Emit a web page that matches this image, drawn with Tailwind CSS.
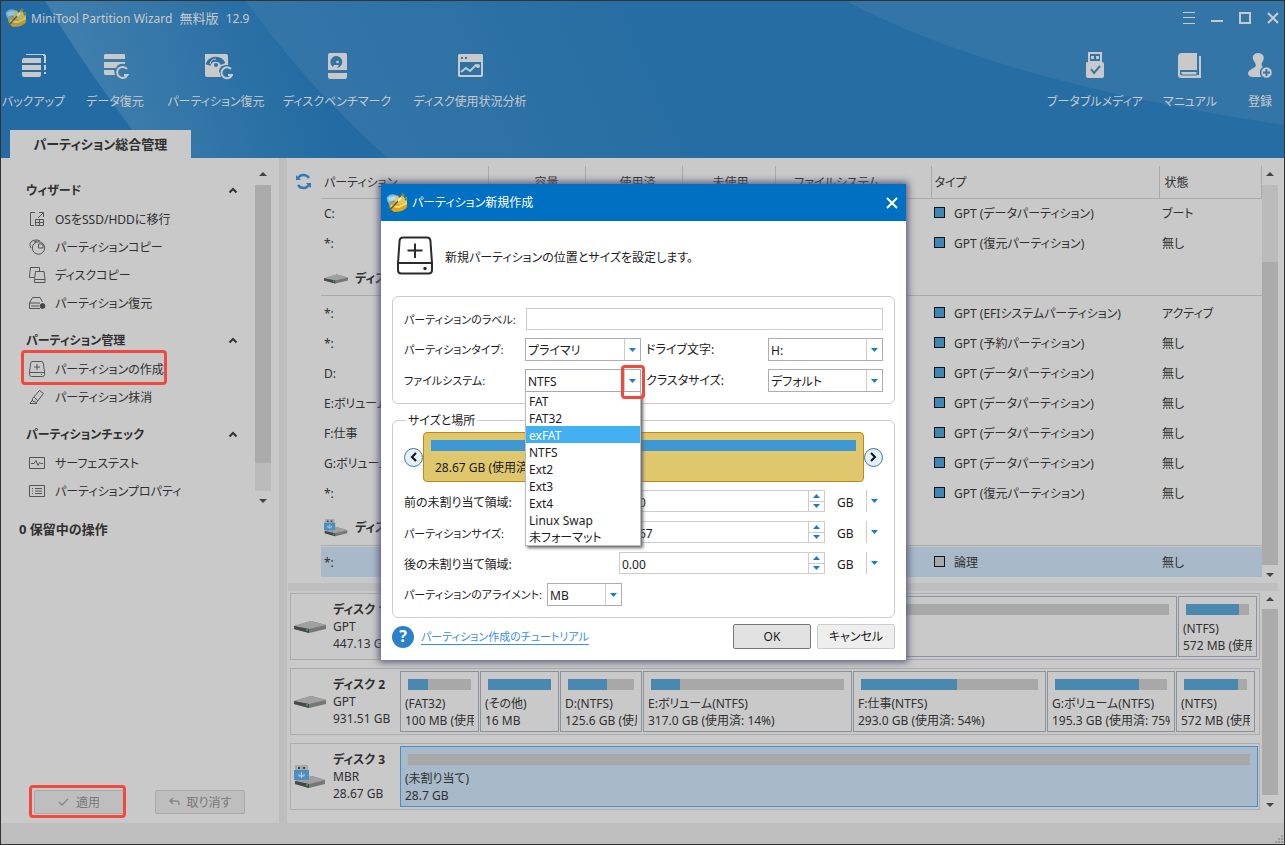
<!DOCTYPE html>
<html lang="ja">
<head>
	<meta charset="UTF-8">
	<meta name="viewport" content="width=device-width, initial-scale=1.0">
	<title>MiniTool Partition Wizard</title>
	<script src="https://cdn.jsdelivr.net/npm/@tailwindcss/browser@4"></script>
</head>
<body class="font-['Noto_Sans','Noto_Sans_CJK_JP',sans-serif] [font-feature-settings:'palt'] text-[12px] leading-[17px] text-[#303030] whitespace-nowrap">

	<!-- shared icons -->
	<svg class="hidden">
		<symbol id="logo" viewBox="0 0 22 22">
			<path d="M1 5Q4 1 10 3L13 6L3 12Q0 8 1 5Z" fill="#7db9de"/>
			<path d="M2 6Q6 3 11 5L9 8L3 9Z" fill="#b5dcf0"/>
			<path d="M3 12L9 9L13 11L21 8V15Q18 20 8 20L4 17Z" fill="#dfa81c"/>
			<path d="M8 9L11 3L14 6L17 1L18 6L21 5V10L14 13Z" fill="#e8c54c"/>
			<path d="M5 13L13 14L21 10V12L13 16L5 15Z" fill="#f7df72"/>
			<circle cx="17" cy="3" r="1.500" fill="#9c8126"/>
			<circle cx="20" cy="7" r="1.500" fill="#57934c"/>
			<path d="M1 21L14 7" stroke="#50616b" stroke-width="1.600"/>
			<path d="M12 9L15 6" stroke="#f3f3e4" stroke-width="1.800"/>
		</symbol>
		<symbol id="drive" viewBox="0 0 32 12">
			<path d="M0 5L17 0L32 4V8L15 12L0 8Z" fill="#777"/>
			<path d="M0 5L17 0L32 4L15 8Z" fill="#a0a0a0"/>
			<path d="M0 5L15 8V12L0 8Z" fill="#484848"/>
			<rect x="12" y="8" width="2" height="2" fill="#27a04c"/>
		</symbol>
		<symbol id="usbdrive" viewBox="0 0 32 24">
			<path d="M1 16L18 11L31 15V19L15 23L1 19Z" fill="#777"/>
			<path d="M1 16L18 11L31 15L15 19Z" fill="#a0a0a0"/>
			<path d="M1 16L15 19V23L1 19Z" fill="#484848"/>
			<rect x="12" y="19" width="2" height="2" fill="#27a04c"/>
			<path d="M1 0H14V6H1Z" fill="#a9a9a9"/>
			<path d="M4 2H6V4H4ZM9 2H11V4H9Z" fill="#444"/>
			<path d="M0 5H15V15H0Z" fill="#4c90c0"/>
			<path d="M7.500 7V13M5 9V11H10V9" stroke="#b6d3e6" fill="none"/>
		</symbol>
		<symbol id="down" viewBox="0 0 7 4"><path d="M0 0H7L3.500 4Z" fill="#1b7bcb"/></symbol>
		<symbol id="up" viewBox="0 0 7 4"><path d="M0 4H7L3.500 0Z" fill="#1b7bcb"/></symbol>
		<symbol id="sbup" viewBox="0 0 8 4"><path d="M0 4H8L4 0Z" fill="#444"/></symbol>
		<symbol id="sbdown" viewBox="0 0 8 4"><path d="M0 0H8L4 4Z" fill="#444"/></symbol>
		<symbol id="fold" viewBox="0 0 10 7"><path d="M1.500 5.500L5 2L8.500 5.500" fill="none" stroke="#333" stroke-width="2"/></symbol>
		<symbol id="newdisk" viewBox="0 0 36 39">
			<g fill="none" stroke="#2b2b2b" stroke-width="2">
				<path d="M6 1.500H30Q33 1.500 33.400 4.500L35 27V34Q35 37.500 31.500 37.500H4.500Q1 37.500 1 34V27L2.600 4.500Q3 1.500 6 1.500Z"/>
				<path d="M1.500 27H34.500M18 7.500V22M10.500 14.500H25.500"/>
			</g>
			<circle cx="28" cy="32.500" r="1.700" fill="#2b2b2b"/>
		</symbol>
	</svg>

	<div class="relative min-h-screen flex flex-col border border-[#333] bg-[#c9c9c9]">

		<!-- header -->
		<header class="relative h-[157px] bg-[#236ba2] text-[#c9c9c9] flex flex-col overflow-hidden">
			<svg class="absolute inset-0 w-full h-full" viewBox="0 0 1283 157" preserveAspectRatio="none">
				<defs>
					<linearGradient id="g1" gradientUnits="userSpaceOnUse" x1="60" y1="90" x2="300" y2="20"><stop offset="0" stop-color="#4280ae"/><stop offset="1" stop-color="#236ba2"/></linearGradient>
					<linearGradient id="g2" gradientUnits="userSpaceOnUse" x1="270" y1="90" x2="620" y2="-60"><stop offset="0" stop-color="#3576a8"/><stop offset="1" stop-color="#266da3"/></linearGradient>
				</defs>
				<path d="M44 0Q80 60 132 130V157H387Q310 80 245 0Z" fill="url(#g1)"/>
				<path d="M245 0Q310 90 387 157H1283V0Z" fill="url(#g2)"/>
				<path d="M845 0Q1000 82 1283 124V0Z" fill="#3375a7"/>
			</svg>
			<div class="relative flex items-center h-[34px] pl-1 -mr-[3px]">
				<svg class="w-[22px] h-[22px] opacity-80"><use href="#logo"/></svg>
				<h1 class="ml-1 grow">MiniTool Partition Wizard <span class="mx-1 text-[13px]">無料版</span> 12.9</h1>
				<button class="w-7 h-7 grid place-items-center" aria-label="メニュー"><svg class="w-3 h-3" stroke="#c9c9c9"><path d="M0 .5H12M0 5.500H12M0 11.500H12"/></svg></button>
				<button class="w-7 h-7 grid place-items-center" aria-label="最小化"><svg class="w-3 h-3" stroke="#c9c9c9" stroke-width="2"><path d="M0 9H12"/></svg></button>
				<button class="w-7 h-7 grid place-items-center" aria-label="最大化"><svg class="w-3 h-3" fill="none" stroke="#c9c9c9" stroke-width="2"><path d="M1 1H11V11H1Z"/></svg></button>
				<button class="w-7 h-7 grid place-items-center" aria-label="閉じる"><svg class="w-3 h-3" stroke="#c9c9c9" stroke-width="2.200"><path d="M1 1L11 11M11 1L1 11"/></svg></button>
			</div>
			<nav class="relative flex h-[95px] pt-4">
				<button class="w-[65px] flex flex-col items-center gap-3">
					<svg class="w-[30px] h-[30px]" viewBox="0 0 30 30" fill="#c9c9c9"><path d="M7 3H26V5H24V4H7ZM25 4H27V12H25ZM25 14H27V19H25ZM25 21H27V23H25ZM5 7H22V12H3V9Q3 7 5 7ZM3 14H22V19H3ZM3 21H22V24Q22 26 20 26H5Q3 26 3 24Z"/></svg>
					バックアップ
				</button>
				<button class="w-[98px] flex flex-col items-center gap-3">
					<svg class="w-[30px] h-[30px]" viewBox="0 0 30 30" fill="#c9c9c9"><path d="M5 3H24Q25 3 25 4V8H4V4ZM4 11H25V13Q18 12 16 17H4ZM4 19H14L15 24H5L4 23Z"/><path d="M27 18A5.500 5.500 0 1 0 27.500 24H24" fill="none" stroke="#c9c9c9" stroke-width="2"/></svg>
					データ復元
				</button>
				<button class="w-[104px] flex flex-col items-center gap-3">
					<svg class="w-[34px] h-[30px]" viewBox="0 0 34 30"><path d="M6 3H27Q29 3 29 5V14Q21 13 20 20L22 26H8Q6 26 6 24Z" fill="#c9c9c9"/><path d="M9 14A8 8 0 0 1 24 13" stroke="#2d71a6" stroke-width="5" fill="none"/><path d="M11 13A6 6 0 0 1 17 8" stroke="#c9c9c9" fill="none"/><circle cx="17" cy="14" r="2" fill="#2d71a6"/><path d="M32 18A5.500 5.500 0 1 0 33 24H29" fill="none" stroke="#c9c9c9" stroke-width="2"/></svg>
					パーティション復元
				</button>
				<button class="w-[138px] flex flex-col items-center gap-3">
					<svg class="w-[30px] h-[30px]" viewBox="0 0 30 30"><path d="M8 2H23Q25 2 25 4V19H6V4Q6 2 8 2ZM6 22H25V26Q25 28 23 28H8Q6 28 6 26Z" fill="#c9c9c9"/><path d="M11 16A6 6 0 1 1 15 17L17 14H12Z" fill="#3073a7"/><circle cx="15.500" cy="11" r="1.300" fill="#c9c9c9"/></svg>
					ディスクベンチマーク
				</button>
				<button class="w-[128px] flex flex-col items-center gap-3">
					<svg class="w-[30px] h-[30px]" viewBox="0 0 30 30"><path d="M5 3H27L28 4V25L27 26H4L3 25V4L4 3Z" fill="#c9c9c9"/><path d="M5 11H26V24H5Z" fill="#2d71a6"/><path d="M6 6H8V8H6ZM10 6H12V8H10Z" fill="#2d71a6"/><path d="M6 21L11 17L15 20L21 14L24 16" fill="none" stroke="#c9c9c9" stroke-width="2"/><circle cx="23" cy="15" r="2" fill="#c9c9c9"/></svg>
					ディスク使用状況分析
				</button>
				<span class="grow"></span>
				<button class="w-[98px] flex flex-col items-center gap-3">
					<svg class="w-[30px] h-[30px]" viewBox="0 0 30 30"><path d="M8 1H22V12H8Z" fill="#c9c9c9"/><path d="M10 3H20V10H10Z" fill="#3375a7"/><path d="M11 5H14V8H11ZM16 5H19V8H16ZM6 12Q6 11 8 11H22Q24 11 24 13V25Q24 27 22 27H8Q6 27 6 25Z" fill="#c9c9c9"/><path d="M11 18L14 22L20 15" fill="none" stroke="#3375a7" stroke-width="2"/></svg>
					ブータブルメディア
				</button>
				<button class="w-[92px] flex flex-col items-center gap-3">
					<svg class="w-[30px] h-[30px]" viewBox="0 0 30 30"><path d="M7 2H22V19H5V24H24V5H26V27H6Q3 27 3 24V6Q3 2 7 2Z" fill="#c9c9c9"/><path d="M5.500 20.500H22V24H6.500Z" fill="#c9c9c9" stroke="#3375a7"/></svg>
					マニュアル
				</button>
				<button class="w-12 flex flex-col items-center gap-3">
					<svg class="w-[30px] h-[30px]" viewBox="0 0 30 30"><path d="M13 2C18 2 20 6 18 10Q15 14 18 16L22 18V26H8C2 26 2 21 5 19L10 16Q12 14 9 10C6 6 9 2 13 2Z" fill="#c9c9c9"/><circle cx="21.500" cy="21.500" r="6" fill="#c9c9c9" stroke="#3375a7" stroke-width="1.500"/><path d="M21.500 18V25M18 21.500H25" stroke="#3375a7" stroke-width="1.800"/></svg>
					登録
				</button>
			</nav>
			<div class="relative flex pl-[9px]">
				<button class="w-[181px] h-7 pt-px bg-[#c9c9c9] text-[#303030] text-[13px] font-bold">パーティション総合管理</button>
			</div>
		</header>

		<div class="grow flex">

			<!-- sidebar -->
			<aside class="w-[278px] shrink-0 flex flex-col">
				<div class="flex">
					<div class="w-[254px] pt-[17px] pl-5">
						<h2 class="flex items-center h-[30px] pl-[5px] pr-[17px] font-bold">ウィザード<svg class="w-[10px] h-[7px] ml-auto"><use href="#fold"/></svg></h2>
						<ul>
							<li><a href="#" class="flex items-center gap-[9px] h-7 pl-2">
								<svg class="w-[17px] h-4" fill="none" stroke="#555" viewBox="0 0 17 16"><path d="M6 1.500H1.500V14.500H5M9 7L14 2M10 1.500H14.500V6M6.500 8.500H14.500V14.500H6.500ZM6.500 11.500H14.500M10.500 8.500V14.500"/></svg>OSをSSD/HDDに移行</a></li>
							<li><a href="#" class="flex items-center gap-[9px] h-7 pl-2">
								<svg class="w-[17px] h-4" fill="none" stroke="#555" viewBox="0 0 17 16"><circle cx="9.500" cy="9" r="6.200"/><path d="M9.500 5V9H14V6Q12 4 9.500 5M2 9Q-1 4 4 1.500Q8 0 11 2M5 3L8 2"/></svg>パーティションコピー</a></li>
							<li><a href="#" class="flex items-center gap-[9px] h-7 pl-2">
								<svg class="w-[17px] h-4" fill="none" stroke="#555" viewBox="0 0 17 16"><path d="M5 10.500H.5V9L1.500 .5H10.500V4M6.500 4.500H15L16 12.500V15.500H5.500V12.500ZM5.500 12.500H16"/></svg>ディスクコピー</a></li>
							<li><a href="#" class="flex items-center gap-[9px] h-7 pl-2">
								<svg class="w-[17px] h-4" fill="none" stroke="#555" viewBox="0 0 17 16"><path d="M.5 8L3.500 2.500H11L13.500 7M.5 8H11M.5 8V13.500H11M3 10V12M5 10V12M7 10V12M9 10V12"/><circle cx="13.500" cy="11" r="2.500" fill="#444"/></svg>パーティション復元</a></li>
						</ul>
						<h2 class="flex items-center h-[30px] mt-2 pl-[5px] pr-[17px] font-bold">パーティション管理<svg class="w-[10px] h-[7px] ml-auto"><use href="#fold"/></svg></h2>
						<ul>
							<li class="relative"><a href="#" class="flex items-center gap-[9px] h-7 pl-2">
								<svg class="w-[17px] h-4" fill="none" stroke="#555" viewBox="0 0 17 16"><path d="M3 .5H13Q14 .5 14.500 3L15.500 11V13.500Q15.500 15.500 13.500 15.500H2.500Q.5 15.500 .5 13.500V11L1.500 3Q2 .5 3 .5ZM.5 11.500H15.500M8 3V9M5 6H11M12 13.500H13"/></svg>パーティションの作成</a>
								<span class="absolute -top-[5px] left-0 w-[146px] h-[35px] border-3 border-[#f04a3e] rounded-sm"></span></li>
							<li><a href="#" class="flex items-center gap-[9px] h-7 pl-2">
								<svg class="w-[17px] h-4" fill="none" stroke="#555" viewBox="0 0 17 16"><path d="M10.500 1.500L14.500 4.500L7.500 13.500L3.500 12V9.500ZM5 8L9 12M1 14.500H8M3.500 11L1 14.500"/></svg>パーティション抹消</a></li>
						</ul>
						<h2 class="flex items-center h-[30px] mt-2 pl-[5px] pr-[17px] font-bold">パーティションチェック<svg class="w-[10px] h-[7px] ml-auto"><use href="#fold"/></svg></h2>
						<ul>
							<li><a href="#" class="flex items-center gap-[9px] h-7 pl-2">
								<svg class="w-[17px] h-4" fill="none" stroke="#555" viewBox="0 0 17 16"><path d="M.5 2.500H15.500V13.500H.5ZM2 8.500H5L7 5.500L9 10.500L10.500 7.500L11.500 8.500H14"/></svg>サーフェステスト</a></li>
							<li><a href="#" class="flex items-center gap-[9px] h-7 pl-2">
								<svg class="w-[17px] h-4" fill="none" stroke="#555" viewBox="0 0 17 16"><path d="M.5 2.500H15.500V13.500H.5ZM3 5.500H4M6 5.500H13M3 8H4M6 8H13M3 10.500H4M6 10.500H13"/></svg>パーティションプロパティ</a></li>
						</ul>
					</div>
					<div class="w-4 pt-[14px] flex flex-col items-center">
						<svg class="w-2 h-1"><use href="#sbup"/></svg>
						<div class="w-4 h-[278px] mt-[9px] bg-[#ababab]"></div>
						<div class="w-4 h-7 bg-[#bbb]"></div>
						<svg class="w-2 h-1 mt-2"><use href="#sbdown"/></svg>
					</div>
				</div>
				<p class="mt-4 pl-[18px] text-[13px] font-bold">0 保留中の操作</p>
				<div class="mt-auto mb-[9px] pl-[33px] flex gap-[31px] text-[#777]">
					<div class="relative">
						<button class="w-[90px] h-6 flex items-center justify-center gap-[7px] border border-[#aaa] rounded-xs bg-[#bebebe]"><svg class="w-[11px] h-2" fill="none" stroke="#888" stroke-width="1.500"><path d="M1 4L4 7L10 1"/></svg>適用</button>
						<span class="absolute -top-[5px] -left-[5px] w-[97px] h-[33px] border-3 border-[#f04a3e] rounded-sm"></span>
					</div>
					<button class="w-[90px] h-6 flex items-center justify-center gap-[7px] border border-[#aaa] rounded-xs bg-[#bebebe]"><svg class="w-[11px] h-2" fill="none" stroke="#888" stroke-width="1.500"><path d="M4 0L1 3L4 6M1 3H8Q10 3 10 7"/></svg>取り消す</button>
				</div>
			</aside>
			<div class="w-2 shrink-0 bg-[#bebebe]"></div>

			<main class="grow flex flex-col min-w-0">

				<!-- partition list -->
				<section class="h-[425px] flex overflow-hidden">
					<div class="w-[34px] shrink-0 pt-[15px] pl-2">
						<button class="block" aria-label="更新"><svg class="w-[17px] h-[17px]" viewBox="0 0 17 17" fill="none" stroke="#2f7cb5" stroke-width="2.400"><path d="M2.500 6.500Q4 2 8.500 2Q12 2 14 5M14.500 10.500Q13 15 8.500 15Q5 15 3 12"/><path d="M1 2V7H6ZM16 15V10H11Z" fill="#2f7cb5" stroke="none"/></svg></button>
					</div>
					<div class="grow min-w-0 pt-[8px]">
						<table class="w-full table-fixed border-collapse text-left">
							<colgroup><col class="w-[167px]"><col class="w-[97px]"><col class="w-[97px]"><col class="w-[93px]"><col class="w-[156px]"><col class="w-[228px]"><col></colgroup>
							<thead>
								<tr class="h-8 *:font-normal *:border-r *:border-[#aaa] *:pt-[2px] border-b border-[#aaa]">
									<th class="pl-[3px]">パーティション</th>
									<th class="pr-[26px] text-right">容量</th>
									<th class="pr-[26px] text-right">使用済</th>
									<th class="pr-[26px] text-right">未使用</th>
									<th class="pr-[51px] text-right">ファイルシステム</th>
									<th class="pl-[3px]">タイプ</th>
									<th class="pl-[5px]">状態</th>
								</tr>
							</thead>
							<tbody>
								<tr class="h-[30px]"><td class="pl-[3px]">C:</td><td colspan="4"></td><td class="pl-[3px]"><span class="inline-block w-[11px] h-[11px] mr-[9px] border border-[#111] bg-[#3e87b5]"></span>GPT (データパーティション)</td><td class="pl-[3px]">ブート</td></tr>
								<tr class="h-[30px]"><td class="pl-[3px]">*:</td><td colspan="4"></td><td class="pl-[3px]"><span class="inline-block w-[11px] h-[11px] mr-[9px] border border-[#111] bg-[#3e87b5]"></span>GPT (復元パーティション)</td><td class="pl-[3px]">無し</td></tr>
								<tr class="h-10"><td colspan="7" class="pb-[2px]"><div class="flex items-center h-[38px] pt-1 pl-[3px] border-b border-[#aaa] font-bold"><svg class="w-6 h-[10px] mr-[7px]"><use href="#drive"/></svg>ディスク 2</div></td></tr>
								<tr class="h-[30px]"><td class="pl-[3px]">*:</td><td colspan="4"></td><td class="pl-[3px]"><span class="inline-block w-[11px] h-[11px] mr-[9px] border border-[#111] bg-[#3e87b5]"></span>GPT (EFIシステムパーティション)</td><td class="pl-[3px]">アクティブ</td></tr>
								<tr class="h-[30px]"><td class="pl-[3px]">*:</td><td colspan="4"></td><td class="pl-[3px]"><span class="inline-block w-[11px] h-[11px] mr-[9px] border border-[#111] bg-[#3e87b5]"></span>GPT (予約パーティション)</td><td class="pl-[3px]">無し</td></tr>
								<tr class="h-[30px]"><td class="pl-[3px]">D:</td><td colspan="4"></td><td class="pl-[3px]"><span class="inline-block w-[11px] h-[11px] mr-[9px] border border-[#111] bg-[#3e87b5]"></span>GPT (データパーティション)</td><td class="pl-[3px]">無し</td></tr>
								<tr class="h-[30px]"><td class="pl-[3px]">E:ボリューム</td><td colspan="4"></td><td class="pl-[3px]"><span class="inline-block w-[11px] h-[11px] mr-[9px] border border-[#111] bg-[#3e87b5]"></span>GPT (データパーティション)</td><td class="pl-[3px]">無し</td></tr>
								<tr class="h-[30px]"><td class="pl-[3px]">F:仕事</td><td colspan="4"></td><td class="pl-[3px]"><span class="inline-block w-[11px] h-[11px] mr-[9px] border border-[#111] bg-[#3e87b5]"></span>GPT (データパーティション)</td><td class="pl-[3px]">無し</td></tr>
								<tr class="h-[30px]"><td class="pl-[3px]">G:ボリューム</td><td colspan="4"></td><td class="pl-[3px]"><span class="inline-block w-[11px] h-[11px] mr-[9px] border border-[#111] bg-[#3e87b5]"></span>GPT (データパーティション)</td><td class="pl-[3px]">無し</td></tr>
								<tr class="h-[30px]"><td class="pl-[3px]">*:</td><td colspan="4"></td><td class="pl-[3px]"><span class="inline-block w-[11px] h-[11px] mr-[9px] border border-[#111] bg-[#3e87b5]"></span>GPT (復元パーティション)</td><td class="pl-[3px]">無し</td></tr>
								<tr class="h-[39px]"><td colspan="7" class="pb-px"><div class="flex items-center h-[38px] pt-[2px] pl-[3px] border-b border-[#aaa] font-bold"><svg class="w-6 h-[18px] mr-[7px]"><use href="#usbdrive"/></svg>ディスク 3</div></td></tr>
								<tr class="h-[30px] bg-[#a8b9c9]"><td class="pl-[3px]">*:</td><td colspan="4"></td><td class="pl-[3px]"><span class="inline-block w-[11px] h-[11px] mr-[9px] border border-[#111] bg-[#a8a8a8]"></span>論理</td><td class="pl-[3px]">無し</td></tr>
							</tbody>
						</table>
					</div>
					<div class="w-4 shrink-0 mr-[6px] pt-[14px] flex flex-col items-center">
						<svg class="w-2 h-1"><use href="#sbup"/></svg>
						<div class="w-4 h-[77px] mt-[9px] bg-[#bbb]"></div>
						<div class="w-4 h-[303px] bg-[#ababab]"></div>
						<svg class="w-2 h-1 mt-2"><use href="#sbdown"/></svg>
					</div>
				</section>
				<div class="h-2 ml-px mr-[6px] bg-[#bebebe]"></div>

				<!-- disk map -->
				<section class="grow flex pt-[2px] pl-[3px] pr-[6px]">
					<div class="grow flex flex-col gap-2 min-w-0 mr-[2px]">
						<div class="flex h-[67px] py-[2px] pr-[2px] border border-[#ababb0]">
							<div class="w-[109px] shrink-0 flex items-center gap-[7px] pl-[3px]">
								<svg class="w-8 h-3"><use href="#drive"/></svg>
								<div><b>ディスク 1</b><br>GPT<br>447.13 GB</div>
							</div>
							<div class="grow min-w-0 flex gap-px">
								<div class="flex-[767] min-w-0 border border-[#8a93a3] pt-[7px] px-1"><div class="h-[11px] mx-[3px] bg-[#a8a8a8]"></div></div>
								<div class="flex-[69] min-w-0 border border-[#8a93a3] pt-[7px] px-1"><div class="h-[11px] mx-[3px] bg-[#a8a8a8]"><div class="h-full bg-[#4a88af]" style="width:84%"></div></div><p class="mt-[5px] overflow-hidden">(NTFS)<br>572 MB (使用済: 84%)</p></div>
							</div>
						</div>
						<div class="flex h-[67px] py-[2px] pr-1 border border-[#adadad]">
							<div class="w-[109px] shrink-0 flex items-center gap-[7px] pl-[3px]">
								<svg class="w-8 h-3"><use href="#drive"/></svg>
								<div><b>ディスク 2</b><br>GPT<br>931.51 GB</div>
							</div>
							<div class="grow min-w-0 flex gap-px">
								<div class="flex-[69] min-w-0 border border-[#8a939c] pt-[7px] px-1"><div class="h-[11px] mx-[3px] bg-[#a8a8a8]"><div class="h-full bg-[#4a88af]" style="width:32%"></div></div><p class="mt-[5px] overflow-hidden">(FAT32)<br>100 MB (使用済: 32%)</p></div>
								<div class="flex-[69] min-w-0 border border-[#8a939c] pt-[7px] px-1"><div class="h-[11px] mx-[3px] bg-[#a8a8a8]"><div class="h-full bg-[#4a88af]" style="width:100%"></div></div><p class="mt-[5px] overflow-hidden">(その他)<br>16 MB</p></div>
								<div class="flex-[72] min-w-0 border border-[#8a939c] pt-[7px] px-1"><div class="h-[11px] mx-[3px] bg-[#a8a8a8]"><div class="h-full bg-[#4a88af]" style="width:59%"></div></div><p class="mt-[5px] overflow-hidden">D:(NTFS)<br>125.6 GB (使用済: 59%)</p></div>
								<div class="flex-[199] min-w-0 border border-[#8a939c] pt-[7px] px-1"><div class="h-[11px] mx-[3px] bg-[#a8a8a8]"><div class="h-full bg-[#4a88af]" style="width:15%"></div></div><p class="mt-[5px] overflow-hidden">E:ボリューム(NTFS)<br>317.0 GB (使用済: 14%)</p></div>
								<div class="flex-[183] min-w-0 border border-[#8a939c] pt-[7px] px-1"><div class="h-[11px] mx-[3px] bg-[#a8a8a8]"><div class="h-full bg-[#4a88af]" style="width:54%"></div></div><p class="mt-[5px] overflow-hidden">F:仕事(NTFS)<br>293.0 GB (使用済: 54%)</p></div>
								<div class="flex-[118] min-w-0 border border-[#8a939c] pt-[7px] px-1"><div class="h-[11px] mx-[3px] bg-[#a8a8a8]"><div class="h-full bg-[#4a88af]" style="width:75%"></div></div><p class="mt-[5px] overflow-hidden">G:ボリューム(NTFS)<br>195.3 GB (使用済: 75%)</p></div>
								<div class="flex-[69] min-w-0 border border-[#8a939c] pt-[7px] px-1"><div class="h-[11px] mx-[3px] bg-[#a8a8a8]"><div class="h-full bg-[#4a88af]" style="width:86%"></div></div><p class="mt-[5px] overflow-hidden">(NTFS)<br>572 MB (使用済: 86%)</p></div>
							</div>
						</div>
						<div class="flex h-[67px] py-[2px] pr-px border border-[#adadad]">
							<div class="w-[109px] shrink-0 flex items-center gap-[7px] pl-[3px]">
								<svg class="w-8 h-6"><use href="#usbdrive"/></svg>
								<div><b>ディスク 3</b><br>MBR<br>28.67 GB</div>
							</div>
							<div class="grow border border-[#4490cc] bg-[#a8b9c9] pt-[7px] px-1"><div class="h-[11px] mx-[3px] bg-[#a8a8a8]"></div><p class="mt-[5px]">(未割り当て)<br>28.7 GB</p></div>
						</div>
					</div>
					<div class="w-4 shrink-0 pt-1 flex flex-col items-center">
						<svg class="w-2 h-1"><use href="#sbup"/></svg>
						<div class="w-4 h-[186px] mt-2 bg-[#ababab]"></div>
						<svg class="w-2 h-1 mt-2"><use href="#sbdown"/></svg>
					</div>
				</section>
			</main>
		</div>

		<footer class="h-[21px] bg-[#bebebe] flex justify-end items-end">
			<svg class="w-[9px] h-[9px]" fill="#999"><path d="M6 0H8V2H6ZM3 3H5V5H3ZM6 3H8V5H6ZM0 6H2V8H0ZM3 6H5V8H3ZM6 6H8V8H6Z"/></svg>
		</footer>
	</div>

	<!-- new partition dialog -->
	<div class="absolute inset-0 flex items-center justify-center pl-[2px] pb-px text-[#1c1c1c]">
		<div role="dialog" aria-labelledby="dlg-title" class="w-[525px] bg-white shadow-[0_0_7px_2px_#55557a]">
			<div class="flex items-center h-[37px] pl-[5px] bg-[#0070c2] text-white">
				<svg class="w-[22px] h-[22px]"><use href="#logo"/></svg>
				<h2 id="dlg-title" class="grow ml-1">パーティション新規作成</h2>
				<button class="w-7 h-7 grid place-items-center" aria-label="閉じる"><svg class="w-3 h-3" stroke="#fff" stroke-width="2"><path d="M1 1L11 11M11 1L1 11"/></svg></button>
			</div>
			<div class="flex items-center gap-3 h-[75px] pl-4 pb-[6px]">
				<svg class="w-9 h-[39px]"><use href="#newdisk"/></svg>
				<p class="pt-1">新規パーティションの位置とサイズを設定します。</p>
			</div>

			<div class="mx-[11px] h-[108px] pt-[11px] px-[11px] border border-[#ccc] rounded-md flex flex-col gap-2">
				<div class="flex items-center h-[22px]">
					<label for="label" class="w-[122px] text-[11px]">パーティションのラベル:</label>
					<input id="label" type="text" class="grow h-[22px] px-1 border border-[#ccc]">
				</div>
				<div class="flex items-center h-[23px]">
					<label for="type" class="w-[121px] text-[11px]">パーティションタイプ:</label>
					<div class="relative">
						<select id="type" class="block w-[116px] h-[23px] pt-px pl-[2px] appearance-none border border-[#aaadb5] bg-white"><option>プライマリ</option></select>
						<span class="absolute inset-y-px right-px w-4 grid place-items-center border-l border-[#ccc] pointer-events-none"><svg class="w-[7px] h-1"><use href="#down"/></svg></span>
					</div>
					<label for="letter" class="ml-[5px] grow">ドライブ文字:</label>
					<div class="relative">
						<select id="letter" class="block w-[115px] h-[23px] pt-px pl-[2px] appearance-none border border-[#aaadb5] bg-white"><option>H:</option></select>
						<span class="absolute inset-y-px right-px w-4 grid place-items-center border-l border-[#ccc] pointer-events-none"><svg class="w-[7px] h-1"><use href="#down"/></svg></span>
					</div>
				</div>
				<div class="flex items-center h-[23px]">
					<label for="fs" class="w-[121px] text-[11px]">ファイルシステム:</label>
					<div class="relative">
						<select id="fs" class="block w-[116px] h-[23px] pt-px pl-[2px] appearance-none border border-[#aaadb5] bg-white"><option>NTFS</option></select>
						<span class="absolute inset-y-px right-px w-4 grid place-items-center border-l border-[#ccc] pointer-events-none"><svg class="w-[7px] h-1"><use href="#down"/></svg></span>
						<!-- open list -->
						<ul role="listbox" class="absolute z-10 top-[23px] left-0 w-[116px] border border-t-0 border-[#bbb] bg-white leading-[19px] shadow-[2px_2px_3px_#666] *:pl-[3px] *:h-[17px]">
							<li role="option">FAT</li>
							<li role="option">FAT32</li>
							<li role="option" aria-selected="true" class="bg-[#42b0f1] text-white">exFAT</li>
							<li role="option">NTFS</li>
							<li role="option">Ext2</li>
							<li role="option">Ext3</li>
							<li role="option">Ext4</li>
							<li role="option">Linux Swap</li>
							<li role="option">未フォーマット</li>
						</ul>
						<span class="absolute z-20 -top-1 -right-1 w-6 h-[34px] border-3 border-[#f04a3e] rounded-sm"></span>
					</div>
					<label for="cluster" class="ml-[5px] grow">クラスタサイズ:</label>
					<div class="relative">
						<select id="cluster" class="block w-[115px] h-[23px] pt-px pl-[2px] appearance-none border border-[#aaadb5] bg-white"><option>デフォルト</option></select>
						<span class="absolute inset-y-px right-px w-4 grid place-items-center border-l border-[#ccc] pointer-events-none"><svg class="w-[7px] h-1"><use href="#down"/></svg></span>
					</div>
				</div>
			</div>

			<div class="relative mx-[11px] mt-4 h-[198px] pt-[11px] px-[11px] border border-[#ccc] rounded-md">
				<h3 class="absolute -top-[9px] left-[13px] px-[2px] bg-white">サイズと場所</h3>
				<div class="flex items-center h-[50px]">
					<button class="w-[19px] h-[19px] grid place-items-center shrink-0 rounded-full border border-[#3d7ba6] bg-[#e3f0f9]" aria-label="前へ"><svg class="w-[7px] h-[10px]" fill="none" stroke="#111" stroke-width="2"><path d="M6 1L2 5L6 9"/></svg></button>
					<div class="grow h-[50px] pt-[7px] px-[7px] border border-[#c4880e] rounded-sm bg-[#dfc76e]">
						<div class="h-[11px] bg-[#3d98d4]"></div>
						<p class="mt-2 pl-1">28.67 GB (使用済: 0%)</p>
					</div>
					<button class="w-[19px] h-[19px] grid place-items-center shrink-0 rounded-full border border-[#3d7ba6] bg-[#e3f0f9]" aria-label="次へ"><svg class="w-[7px] h-[10px]" fill="none" stroke="#111" stroke-width="2"><path d="M1 1L5 5L1 9"/></svg></button>
				</div>
				<div class="mt-2 flex flex-col gap-[9px]">
					<div class="flex items-center h-[22px]">
						<label for="before" class="w-[215px] pt-[2px]">前の未割り当て領域:</label>
						<input id="before" type="text" value="0.00" class="w-[190px] h-[22px] pt-[2px] px-[2px] border border-[#ccc]">
						<div class="flex flex-col w-4 h-[22px] border border-l-0 border-[#ccc]"><button class="flex-1 grid place-items-center border-b border-[#ccc]" aria-label="増やす"><svg class="w-[7px] h-1"><use href="#up"/></svg></button><button class="flex-1 grid place-items-center" aria-label="減らす"><svg class="w-[7px] h-1"><use href="#down"/></svg></button></div>
						<span class="w-[41px] pt-[2px] pl-3">GB</span>
						<button class="h-[22px] w-4 grid place-items-center border-l border-[#ccc]" aria-label="単位"><svg class="w-[7px] h-1"><use href="#down"/></svg></button>
					</div>
					<div class="flex items-center h-[22px]">
						<label for="size" class="w-[215px] pt-[2px] text-[11px]">パーティションサイズ:</label>
						<input id="size" type="text" value="28.67" class="w-[190px] h-[22px] pt-[2px] px-[2px] border border-[#ccc]">
						<div class="flex flex-col w-4 h-[22px] border border-l-0 border-[#ccc]"><button class="flex-1 grid place-items-center border-b border-[#ccc]" aria-label="増やす"><svg class="w-[7px] h-1"><use href="#up"/></svg></button><button class="flex-1 grid place-items-center" aria-label="減らす"><svg class="w-[7px] h-1"><use href="#down"/></svg></button></div>
						<span class="w-[41px] pt-[2px] pl-3">GB</span>
						<button class="h-[22px] w-4 grid place-items-center border-l border-[#ccc]" aria-label="単位"><svg class="w-[7px] h-1"><use href="#down"/></svg></button>
					</div>
					<div class="flex items-center h-[22px]">
						<label for="after" class="w-[215px] pt-[2px]">後の未割り当て領域:</label>
						<input id="after" type="text" value="0.00" class="w-[190px] h-[22px] pt-[2px] px-[2px] border border-[#ccc]">
						<div class="flex flex-col w-4 h-[22px] border border-l-0 border-[#ccc]"><button class="flex-1 grid place-items-center border-b border-[#ccc]" aria-label="増やす"><svg class="w-[7px] h-1"><use href="#up"/></svg></button><button class="flex-1 grid place-items-center" aria-label="減らす"><svg class="w-[7px] h-1"><use href="#down"/></svg></button></div>
						<span class="w-[41px] pt-[2px] pl-3">GB</span>
						<button class="h-[22px] w-4 grid place-items-center border-l border-[#ccc]" aria-label="単位"><svg class="w-[7px] h-1"><use href="#down"/></svg></button>
					</div>
					<div class="flex items-center h-[23px]">
						<label for="align" class="w-[143px] text-[11px]">パーティションのアライメント:</label>
						<div class="relative">
							<select id="align" class="block w-[75px] h-[23px] pt-px pl-[2px] appearance-none border border-[#aaadb5] bg-white"><option>MB</option></select>
							<span class="absolute inset-y-px right-px w-4 grid place-items-center border-l border-[#ccc] pointer-events-none"><svg class="w-[7px] h-1"><use href="#down"/></svg></span>
						</div>
					</div>
				</div>
			</div>

			<div class="flex items-center h-[42px] px-[11px] pb-[5px]">
				<span class="w-[22px] h-[22px] grid place-items-center rounded-full bg-[#2b80c9] text-white text-[16px] font-bold">?</span>
				<a href="#" class="ml-[7px] grow text-[11px] text-[#3a8ee6] underline underline-offset-3">パーティション作成のチュートリアル</a>
				<button class="w-[78px] h-[25px] border border-[#777] rounded-xs bg-[#e1e1e1]">OK</button>
				<button class="w-[78px] h-[25px] ml-[6px] border border-[#ccc] rounded-xs bg-[#eee]">キャンセル</button>
			</div>
		</div>
	</div>
</body>
</html>
